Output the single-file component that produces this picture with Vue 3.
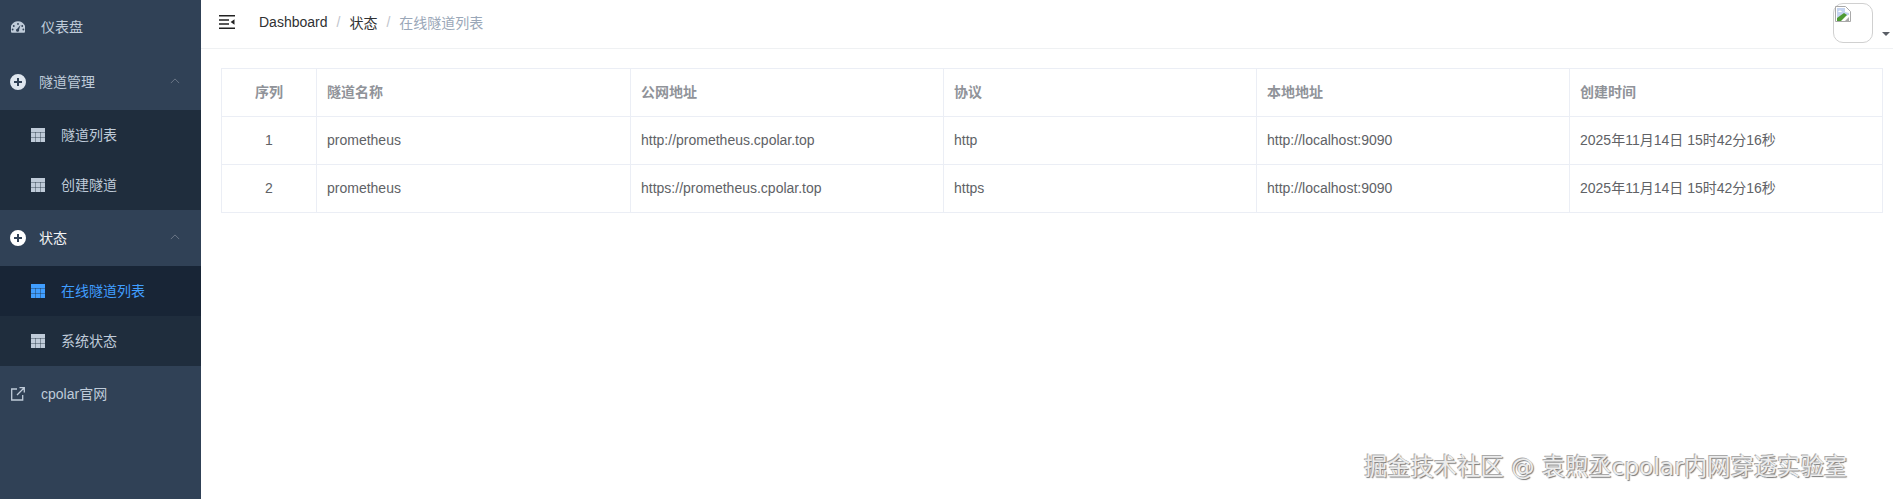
<script setup>
const columns = ['序列', '隧道名称', '公网地址', '协议', '本地地址', '创建时间']
const rows = [
  { id: 1, name: 'prometheus', url: 'http://prometheus.cpolar.top', proto: 'http', local: 'http://localhost:9090', time: '2025年11月14日 15时42分16秒' },
  { id: 2, name: 'prometheus', url: 'https://prometheus.cpolar.top', proto: 'https', local: 'http://localhost:9090', time: '2025年11月14日 15时42分16秒' },
]
</script>

<template>
  <div class="layout">
    <aside class="sidebar">
      <a class="menu-item first">
        <svg class="icon top-icon" viewBox="1.2 1 13.6 11">
          <path fill="currentColor" fill-rule="evenodd" d="M8 1a7.3 7.3 0 0 1 6.3 11H1.7A7.3 7.3 0 0 1 8 1zM8 2.6a.9.9 0 1 0 0 1.8.9.9 0 0 0 0-1.8zM3.9 4.6a.9.9 0 1 0 0 1.8.9.9 0 0 0 0-1.8zM12.1 4.6a.9.9 0 1 0 0 1.8.9.9 0 0 0 0-1.8zM2.8 8a.9.9 0 1 0 0 1.8.9.9 0 0 0 0-1.8zM13.2 8a.9.9 0 1 0 0 1.8.9.9 0 0 0 0-1.8zM10.4 4.6 7.3 8.2a1.5 1.5 0 1 0 1.7 1z" />
        </svg>
        <span class="label">仪表盘</span>
      </a>

      <div class="submenu-title">
        <svg class="icon plus-icon" viewBox="0 0 16 16">
          <path fill="#dfe6ee" fill-rule="evenodd" d="M8 0a8 8 0 1 1 0 16A8 8 0 0 1 8 0zM7 4v3H4v2h3v3h2V9h3V7H9V4z" />
        </svg>
        <span class="title-text">隧道管理</span>
        <svg class="arrow" viewBox="0 0 12 7"><path d="M1 6l5-5 5 5" fill="none" stroke="currentColor" /></svg>
      </div>
      <div class="submenu">
        <a class="sub-item">
          <svg class="icon grid-icon" viewBox="0 0 14 14"><path fill="currentColor" d="M0 0h14v14H0z" /><path class="grid-lines" d="M0 4.5h14M0 9.5h14M4.5 4v10M9.5 4v10" /></svg>
          <span class="sub-text">隧道列表</span>
        </a>
        <a class="sub-item">
          <svg class="icon grid-icon" viewBox="0 0 14 14"><path fill="currentColor" d="M0 0h14v14H0z" /><path class="grid-lines" d="M0 4.5h14M0 9.5h14M4.5 4v10M9.5 4v10" /></svg>
          <span class="sub-text">创建隧道</span>
        </a>
      </div>

      <div class="submenu-title open">
        <svg class="icon plus-icon" viewBox="0 0 16 16">
          <path fill="#fff" fill-rule="evenodd" d="M8 0a8 8 0 1 1 0 16A8 8 0 0 1 8 0zM7 4v3H4v2h3v3h2V9h3V7H9V4z" />
        </svg>
        <span class="title-text">状态</span>
        <svg class="arrow" viewBox="0 0 12 7"><path d="M1 6l5-5 5 5" fill="none" stroke="currentColor" /></svg>
      </div>
      <div class="submenu">
        <a class="sub-item active">
          <svg class="icon grid-icon" viewBox="0 0 14 14"><path fill="currentColor" d="M0 0h14v14H0z" /><path class="grid-lines" d="M0 4.5h14M0 9.5h14M4.5 4v10M9.5 4v10" /></svg>
          <span class="sub-text">在线隧道列表</span>
        </a>
        <a class="sub-item">
          <svg class="icon grid-icon" viewBox="0 0 14 14"><path fill="currentColor" d="M0 0h14v14H0z" /><path class="grid-lines" d="M0 4.5h14M0 9.5h14M4.5 4v10M9.5 4v10" /></svg>
          <span class="sub-text">系统状态</span>
        </a>
      </div>

      <a class="menu-item">
        <svg class="icon top-icon" viewBox="0 0 14 14">
          <path d="M6 2H.7v11h11V8M8.5.7h4.8v4.8M13 1 6 8" fill="none" stroke="currentColor" stroke-width="1.3" />
        </svg>
        <span class="label">cpolar官网</span>
      </a>
    </aside>

    <div class="main">
      <header class="navbar">
        <svg class="hamburger" viewBox="0 0 16 14">
          <path fill="#222" d="M0 0h16v1.5H0zM0 4.2h10v1.5H0zM0 8.3h10v1.5H0zM0 12.5h16V14H0zM15.5 4.2v5.6L11.6 7z" />
        </svg>
        <nav class="breadcrumb">
          <span class="crumb">Dashboard</span>
          <span class="sep">/</span>
          <span class="crumb">状态</span>
          <span class="sep">/</span>
          <span class="crumb last">在线隧道列表</span>
        </nav>
        <div class="avatar-wrap">
          <div class="avatar">
            <svg class="broken" viewBox="0 0 16 16">
              <path fill="#fff" stroke="#a9a9a9" d="M.5.5h10l5 5v10H.5z" />
              <path fill="#c5d4f0" d="M2 2h8v4l4 1v2L2 12z" />
              <path fill="#4e9a34" d="M2 15v-3l7-5 3 2-6 6z" />
              <path fill="#fff" d="M3 6c1-2 3-2 4 0z" />
              <path fill="#a9a9a9" d="M10 15l4-4v4z" />
            </svg>
          </div>
          <i class="caret"></i>
        </div>
      </header>

      <section class="content">
        <table class="table">
          <colgroup>
            <col class="col-index" />
            <col class="col-wide" />
            <col class="col-text" />
            <col class="col-text" />
            <col class="col-text" />
            <col />
          </colgroup>
          <thead>
            <tr>
              <th v-for="(c, i) in columns" :key="c" :class="{ center: i === 0 }">{{ c }}</th>
            </tr>
          </thead>
          <tbody>
            <tr v-for="row in rows" :key="row.id">
              <td class="center">{{ row.id }}</td>
              <td>{{ row.name }}</td>
              <td>{{ row.url }}</td>
              <td>{{ row.proto }}</td>
              <td>{{ row.local }}</td>
              <td class="time">{{ row.time }}</td>
            </tr>
          </tbody>
        </table>
      </section>
    </div>

    <div class="watermark">掘金技术社区 @ 袁煦丞cpolar内网穿透实验室</div>
  </div>
</template>

<style scoped>
.layout {
  position: relative;
  display: flex;
  width: 1893px;
  height: 499px;
  overflow: hidden;
  background: #fff;
  font-family: "Liberation Sans", "Noto Sans CJK SC", sans-serif;
  font-size: 14px;
}

/* sidebar */
.sidebar {
  flex: 0 0 201px;
  background: #304156;
  color: #bfcbd9;
}
.menu-item,
.submenu-title {
  display: flex;
  align-items: center;
  height: 56px;
  padding-left: 11px;
}
.menu-item.first {
  height: 54px;
}
.submenu-title {
  position: relative;
  padding-left: 10px;
}
.submenu-title.open {
  color: #f4f4f5;
}
.menu-item .label {
  margin-left: 15px;
  padding-bottom: 2px;
}
.title-text,
.sub-text {
  padding-bottom: 2px;
}
.title-text {
  margin-left: 13px;
}
.icon {
  flex: none;
  display: block;
}
.top-icon {
  width: 14px;
  height: 14px;
  margin-right: 1px;
}
.first .top-icon {
  height: 12px;
}
.plus-icon {
  width: 16px;
  height: 16px;
}
.arrow {
  position: absolute;
  right: 21px;
  top: 24px;
  width: 10px;
  height: 6px;
  color: #75808f;
}
.submenu {
  background: #1f2d3d;
}
.sub-item {
  display: flex;
  align-items: center;
  height: 50px;
  padding-left: 31px;
  gap: 16px;
}
.sub-item.active {
  background: #182536;
  color: #409eff;
}
.grid-icon {
  width: 14px;
  height: 14px;
}
.grid-lines {
  fill: none;
  stroke: #1f2d3d;
  stroke-width: 1;
  stroke-opacity: 0.4;
}

/* navbar */
.main {
  flex: 1;
  min-width: 0;
}
.navbar {
  display: flex;
  align-items: center;
  height: 49px;
  box-sizing: border-box;
  padding-left: 18px;
  border-bottom: 1px solid #eff1f3;
}
.hamburger {
  width: 16px;
  height: 14px;
  margin-top: -4px;
}
.breadcrumb {
  display: flex;
  align-items: center;
  margin-left: 24px;
  margin-top: -4px;
  color: #303133;
}
.sep {
  margin: 0 9px;
  color: #c0c4cc;
}
.crumb.last {
  color: #9aa7b8;
}
.avatar-wrap {
  display: flex;
  align-items: flex-end;
  margin-left: auto;
  margin-right: 3px;
  margin-top: -3px;
}
.avatar {
  box-sizing: border-box;
  width: 40px;
  height: 40px;
  padding: 2px 1px;
  border: 1px solid #d0d0d0;
  border-radius: 10px;
}
.broken {
  display: block;
  width: 16px;
  height: 16px;
}
.caret {
  width: 0;
  height: 0;
  margin: 0 0 7px 9px;
  border-left: 4px solid transparent;
  border-right: 4px solid transparent;
  border-top: 4px solid #5a5e66;
}

/* table */
.content {
  padding: 19px 10px 0 20px;
}
.table {
  width: 100%;
  table-layout: fixed;
  border-collapse: collapse;
  color: #606266;
}
.col-index {
  width: 95px;
}
.col-wide {
  width: 314px;
}
.col-text {
  width: 313px;
}
.table th,
.table td {
  box-sizing: border-box;
  height: 48px;
  padding: 0 10px 2px;
  border: 1px solid #ebeef5;
  text-align: left;
}
.table th,
.table td.time {
  padding-bottom: 4px;
}
.table th {
  color: #909399;
  font-weight: 700;
}
.table .center {
  text-align: center;
}

.watermark {
  position: absolute;
  right: 46px;
  top: 452px;
  color: #ececec;
  font-family: "DejaVu Sans", "Noto Sans CJK SC", sans-serif;
  font-size: 23.3px;
  line-height: 30px;
  white-space: nowrap;
  text-shadow: -1px -1px 0 #aaa, 1px 1px 1px #777;
}
</style>

<style>
html, body { overflow: hidden; }
</style>
